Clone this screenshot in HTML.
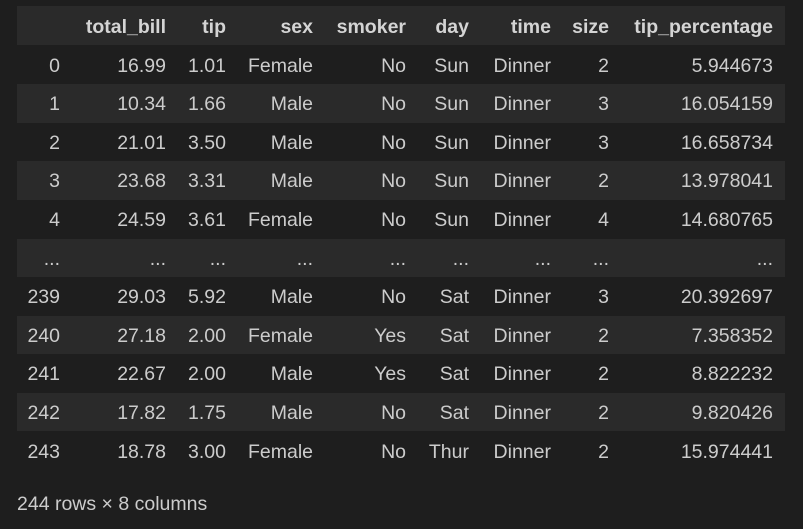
<!DOCTYPE html>
<html><head><meta charset="utf-8"><style>
body{margin:0;width:803px;height:529px;background:#1e1e1e;font-family:"Liberation Sans",sans-serif;font-size:19.5px;color:#cccccc;overflow:hidden;position:relative}
.r{position:absolute;left:17px;width:768px;height:38.6px}
.s{background:#2a2a2a}
.r span{position:absolute;top:1px;line-height:38.6px;text-align:right;white-space:nowrap}
.h{top:6px;height:39px}
.h span{font-weight:bold;color:#d4d4d4;line-height:40px}
.c0{right:725px}.c1{right:619px}.c2{right:559px}.c3{right:472px}.c4{right:379px}.c5{right:316px}.c6{right:234px}.c7{right:176px}.c8{right:12px}
.f{position:absolute;left:17px;top:493px;color:#cccccc}
</style></head><body>
<div class="r h s"><span class="c1">total_bill</span><span class="c2">tip</span><span class="c3">sex</span><span class="c4">smoker</span><span class="c5">day</span><span class="c6">time</span><span class="c7">size</span><span class="c8">tip_percentage</span></div>
<div class="r" style="top:45.5px"><span class="c0">0</span><span class="c1">16.99</span><span class="c2">1.01</span><span class="c3">Female</span><span class="c4">No</span><span class="c5">Sun</span><span class="c6">Dinner</span><span class="c7">2</span><span class="c8">5.944673</span></div>
<div class="r s" style="top:84.1px"><span class="c0">1</span><span class="c1">10.34</span><span class="c2">1.66</span><span class="c3">Male</span><span class="c4">No</span><span class="c5">Sun</span><span class="c6">Dinner</span><span class="c7">3</span><span class="c8">16.054159</span></div>
<div class="r" style="top:122.7px"><span class="c0">2</span><span class="c1">21.01</span><span class="c2">3.50</span><span class="c3">Male</span><span class="c4">No</span><span class="c5">Sun</span><span class="c6">Dinner</span><span class="c7">3</span><span class="c8">16.658734</span></div>
<div class="r s" style="top:161.3px"><span class="c0">3</span><span class="c1">23.68</span><span class="c2">3.31</span><span class="c3">Male</span><span class="c4">No</span><span class="c5">Sun</span><span class="c6">Dinner</span><span class="c7">2</span><span class="c8">13.978041</span></div>
<div class="r" style="top:199.9px"><span class="c0">4</span><span class="c1">24.59</span><span class="c2">3.61</span><span class="c3">Female</span><span class="c4">No</span><span class="c5">Sun</span><span class="c6">Dinner</span><span class="c7">4</span><span class="c8">14.680765</span></div>
<div class="r s" style="top:238.5px"><span class="c0">...</span><span class="c1">...</span><span class="c2">...</span><span class="c3">...</span><span class="c4">...</span><span class="c5">...</span><span class="c6">...</span><span class="c7">...</span><span class="c8">...</span></div>
<div class="r" style="top:277.1px"><span class="c0">239</span><span class="c1">29.03</span><span class="c2">5.92</span><span class="c3">Male</span><span class="c4">No</span><span class="c5">Sat</span><span class="c6">Dinner</span><span class="c7">3</span><span class="c8">20.392697</span></div>
<div class="r s" style="top:315.7px"><span class="c0">240</span><span class="c1">27.18</span><span class="c2">2.00</span><span class="c3">Female</span><span class="c4">Yes</span><span class="c5">Sat</span><span class="c6">Dinner</span><span class="c7">2</span><span class="c8">7.358352</span></div>
<div class="r" style="top:354.3px"><span class="c0">241</span><span class="c1">22.67</span><span class="c2">2.00</span><span class="c3">Male</span><span class="c4">Yes</span><span class="c5">Sat</span><span class="c6">Dinner</span><span class="c7">2</span><span class="c8">8.822232</span></div>
<div class="r s" style="top:392.9px"><span class="c0">242</span><span class="c1">17.82</span><span class="c2">1.75</span><span class="c3">Male</span><span class="c4">No</span><span class="c5">Sat</span><span class="c6">Dinner</span><span class="c7">2</span><span class="c8">9.820426</span></div>
<div class="r" style="top:431.5px"><span class="c0">243</span><span class="c1">18.78</span><span class="c2">3.00</span><span class="c3">Female</span><span class="c4">No</span><span class="c5">Thur</span><span class="c6">Dinner</span><span class="c7">2</span><span class="c8">15.974441</span></div>
<div class="f">244 rows × 8 columns</div>
</body></html>
